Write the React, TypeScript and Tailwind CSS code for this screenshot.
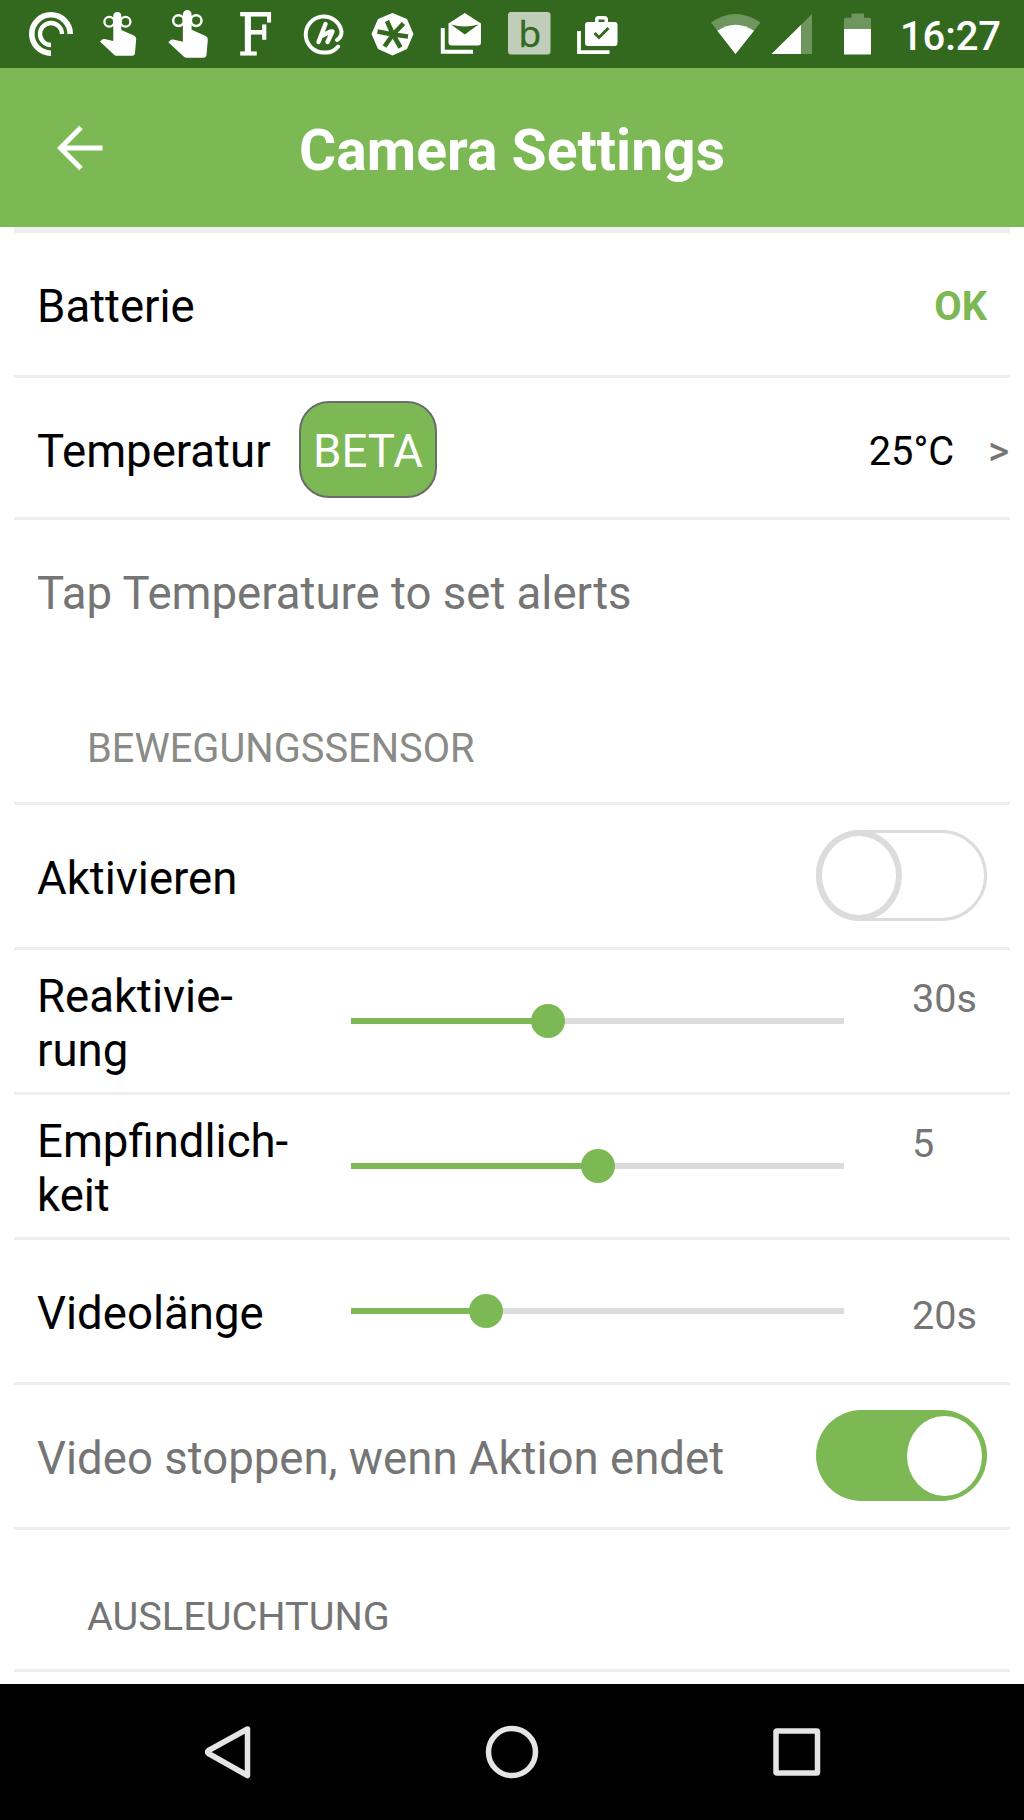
import type { ReactNode } from "react";

function Finger({ className }: { className: string }) {
  return (
    <svg viewBox="0 0 38 44" className={className} fill="#fff">
      <path d="M14.300 4A4 4 0 0 1 22.300 4V18l12.500 5.500q2.500 1 2.400 3.500l-1.200 14q-.3 2.700-3 2.700H17.500q-1.500 0-2.700-1.200L1 29.500l2-1.800q1-.9 2.500-.6l8.800 2z" />
      <circle cx="10.300" cy="9.700" r="4.900" fill="none" stroke="#fff" strokeWidth="2.300" />
      <circle cx="26.500" cy="9.700" r="4.900" fill="none" stroke="#fff" strokeWidth="2.300" />
    </svg>
  );
}

function StatusBar() {
  return (
    <div className="relative h-[68px] bg-[#33691e]">
      <svg viewBox="0 0 1024 68" className="block h-[68px] w-[1024px]">
        {/* podcast arcs */}
        <g fill="none" stroke="#fff">
          <path d="M51 53.200A19.200 19.200 0 1 1 70.200 34" strokeWidth="5.600" />
          <path d="M51 45A11 11 0 1 1 62 34" strokeWidth="4.400" />
        </g>
        {/* round mark with slanted strokes */}
        <g fill="none" stroke="#fff" strokeLinecap="round">
          <path d="M338.200 46.500C334 51.500 329 53 324 52.500A18 18 0 1 1 341.500 31.500Q341.500 37.500 337 40" strokeWidth="4" />
          <path d="M325.500 24 318.500 42M332.500 31.500 327.500 42M322.500 35.500 330.500 31.500" strokeWidth="4.400" />
        </g>
        {/* octagon asterisk */}
        <path d="M392.500 13 407 19 413.500 34 407 49 392.500 55.500 378 49 371.500 34 378 19z" fill="#fff" />
        <path d="M393 34.500 387 21M393 34.500 403.500 23.500M393 34.500 408 36.500M393 34.500 400.500 47.500M393 34.500 384.500 46.500M393 34.500 377.500 31.500" stroke="#33691e" strokeWidth="4.600" />
        {/* stacked open envelope */}
        <path d="M442.800 28V51.700H473" fill="none" stroke="#fff" strokeWidth="4" />
        <path d="M464.800 13 481 23.500V42.500q0 3-3 3H451.500q-3 0-3-3V23.500z" fill="#fff" />
        <path d="M451 24.500Q464.800 28.500 478.500 24.500L464.800 34.500z" fill="#33691e" />
        {/* letter tile */}
        <rect x="508" y="12" width="42.500" height="42.500" rx="3" fill="#bfcdb9" />
        <text x="518.500" y="46.500" fill="#33691e" stroke="#33691e" strokeWidth="0.500" fontFamily="Open Sans, sans-serif" fontSize="37">b</text>
        {/* stacked bag */}
        <path d="M579 31V52.200H609.500" fill="none" stroke="#fff" strokeWidth="3.800" />
        <path fillRule="evenodd" d="M588 22H595V19.500Q595 16 598.500 16H604.500Q608 16 608 19.500V22H614.500Q617.500 22 617.500 25V43Q617.500 46 614.500 46H588Q585 46 585 43V25Q585 22 588 22zM598.500 22H604.500V19.500H598.500z" fill="#fff" />
        <path d="M594.500 33 599 37.500 608.500 28" fill="none" stroke="#33691e" strokeWidth="3" />
        {/* wifi */}
        <path d="M735.500 54 711 22.500Q735.500 5.500 760.500 22.500z" fill="#709660" />
        <path d="M735.500 54 717.300 30.800Q735.500 18.500 754 30.800z" fill="#fff" />
        {/* signal */}
        <path d="M771.500 54 812 14V54z" fill="#709660" />
        <path d="M771.500 54 801 25V54z" fill="#fff" />
        {/* battery */}
        <path d="M844 29V19Q844 17.700 845.500 17.700H851.500V13.500H864V17.700H869.500Q871 17.700 871 19V29z" fill="#709660" />
        <path d="M844 29H871V54.500H844z" fill="#fff" />
        <text x="900" y="50" fill="#fff" fontFamily="Roboto, sans-serif" fontSize="40" fontWeight="500" textLength="101">16:27</text>
      </svg>
      <Finger className="absolute left-[99px] top-[12px] h-[44px] w-[38px]" />
      <Finger className="absolute left-[167px] top-[10px] h-[48px] w-[42px]" />
      <span className="absolute left-[238px] top-0 h-[68px] w-[40px] text-center font-['DejaVu_Serif',serif] text-[58px] leading-[70px] text-white [-webkit-text-stroke:1.2px_#fff]">
        <span className="inline-block origin-left scale-x-[0.860]">F</span>
      </span>
    </div>
  );
}

function Row({ className, children }: { className: string; children: ReactNode }) {
  return (
    <div className={"mx-[14px] flex items-center border-b-[3px] border-[#eeeeee] pl-[23px] " + className}>
      {children}
    </div>
  );
}

function Slider({ value }: { value: number }) {
  return (
    <div className="absolute left-[337px] top-[54px] h-[34px] w-[493px]">
      <div className="mt-[14px] h-[6px] bg-[#dcdcdc]">
        <div className="h-full bg-[#7cb854]" style={{ width: value }} />
      </div>
      <div className="absolute top-0 size-[34px] -translate-x-1/2 rounded-full bg-[#7cb854]" style={{ left: value }} />
    </div>
  );
}

function SliderRow({ label, value, display, tall }: { label: ReactNode; value: number; display: string; tall: boolean }) {
  return (
    <Row className="relative h-[145px] pt-[5px]">
      <div className="w-[875px] leading-[53.500px]">{label}</div>
      <Slider value={value} />
      <div className={"text-[39.600px] leading-[53px] text-[#757575] " + (tall ? "mb-[50px]" : "mt-[4px]")}>{display}</div>
    </Row>
  );
}

export default function App() {
  return (
    <div className="h-[1820px] w-[1024px] overflow-hidden bg-white font-['Roboto',sans-serif] text-[45.560px] leading-[54px] text-black">
      <StatusBar />
      <header className="relative flex h-[159px] items-center justify-center bg-[#7cb854] pt-[7px]">
        <svg viewBox="0 0 46 46" className="absolute left-[57px] top-[57px] size-[46px]" fill="none" stroke="#fff" strokeWidth="5">
          <path d="M24 2.500 3.500 23 24 43.500M3.500 23H45.500" />
        </svg>
        <h1 className="text-[57px] font-bold leading-[68px] text-white">Camera Settings</h1>
      </header>
      <div className="mx-[14px] h-[6px] bg-[#eeeeee]" />
      <Row className="h-[145px] justify-between pr-[23px] pt-[6px]">
        <span>Batterie</span>
        <span className="text-[39.800px] font-bold text-[#7cb854]">OK</span>
      </Row>
      <Row className="h-[142px] pt-[8px]">
        <span className="w-[262px]">Temperatur</span>
        <span className="mb-[4px] flex h-[97px] w-[138px] items-center justify-center rounded-[30px] border-[2px] border-[#6b6b6b] bg-[#7cb854] pt-[4px] text-white">BETA</span>
        <span className="ml-auto text-[39.800px]">25°C</span>
        <span className="ml-[34px] mr-[1px] text-[39.800px] text-[#757575] [-webkit-text-stroke:0.4px_#757575]">&gt;</span>
      </Row>
      <Row className="h-[285px] flex-col items-start! pt-[47px] text-[#757575]">
        <p>Tap Temperature to set alerts</p>
        <h2 className="ml-[50px] mt-[101px] text-[39.800px] text-[#8a8a87]">BEWEGUNGSSENSOR</h2>
      </Row>
      <Row className="h-[145px] justify-between pr-[23px] pt-[6px]">
        <span>Aktivieren</span>
        <div className="mb-[7px] h-[91px] w-[171px] rounded-[46px] border-[3px] border-[#dcdcdc]">
          <div className="-ml-[3px] -mt-[3px] h-[91px] w-[86px] rounded-[50%] border-[6px] border-[#dcdcdc] bg-white" />
        </div>
      </Row>
      <SliderRow label={<>Reaktivie-<br />rung</>} value={197} display="30s" tall />
      <SliderRow label={<>Empfindlich-<br />keit</>} value={247} display="5" tall />
      <SliderRow label="Videolänge" value={135} display="20s" tall={false} />
      <Row className="h-[145px] justify-between pr-[23px] pt-[6px] text-[#757575]">
        <span>Video stoppen, wenn Aktion endet</span>
        <div className="mb-[7px] flex h-[91px] w-[171px] items-center justify-end rounded-[46px] bg-[#7cb854] pr-[5px]">
          <div className="h-[80px] w-[75px] rounded-[50%] bg-white" />
        </div>
      </Row>
      <Row className="h-[142px] pt-[34px]">
        <h2 className="ml-[50px] text-[39.700px] text-[#757575]">AUSLEUCHTUNG</h2>
      </Row>
      <div className="h-[12px]" />
      <nav className="h-[136px] bg-black">
        <svg viewBox="0 0 1024 136" className="block h-[136px] w-[1024px]" fill="none" stroke="#e5e5e5" strokeWidth="5.500" strokeLinejoin="round">
          <path d="M247.500 45 208.500 66.500Q206.500 68 208.500 69.500L247.500 91.500z" />
          <circle cx="512" cy="68" r="23.500" />
          <rect x="776" y="47" width="41.500" height="42" rx="1" />
        </svg>
      </nav>
    </div>
  );
}
